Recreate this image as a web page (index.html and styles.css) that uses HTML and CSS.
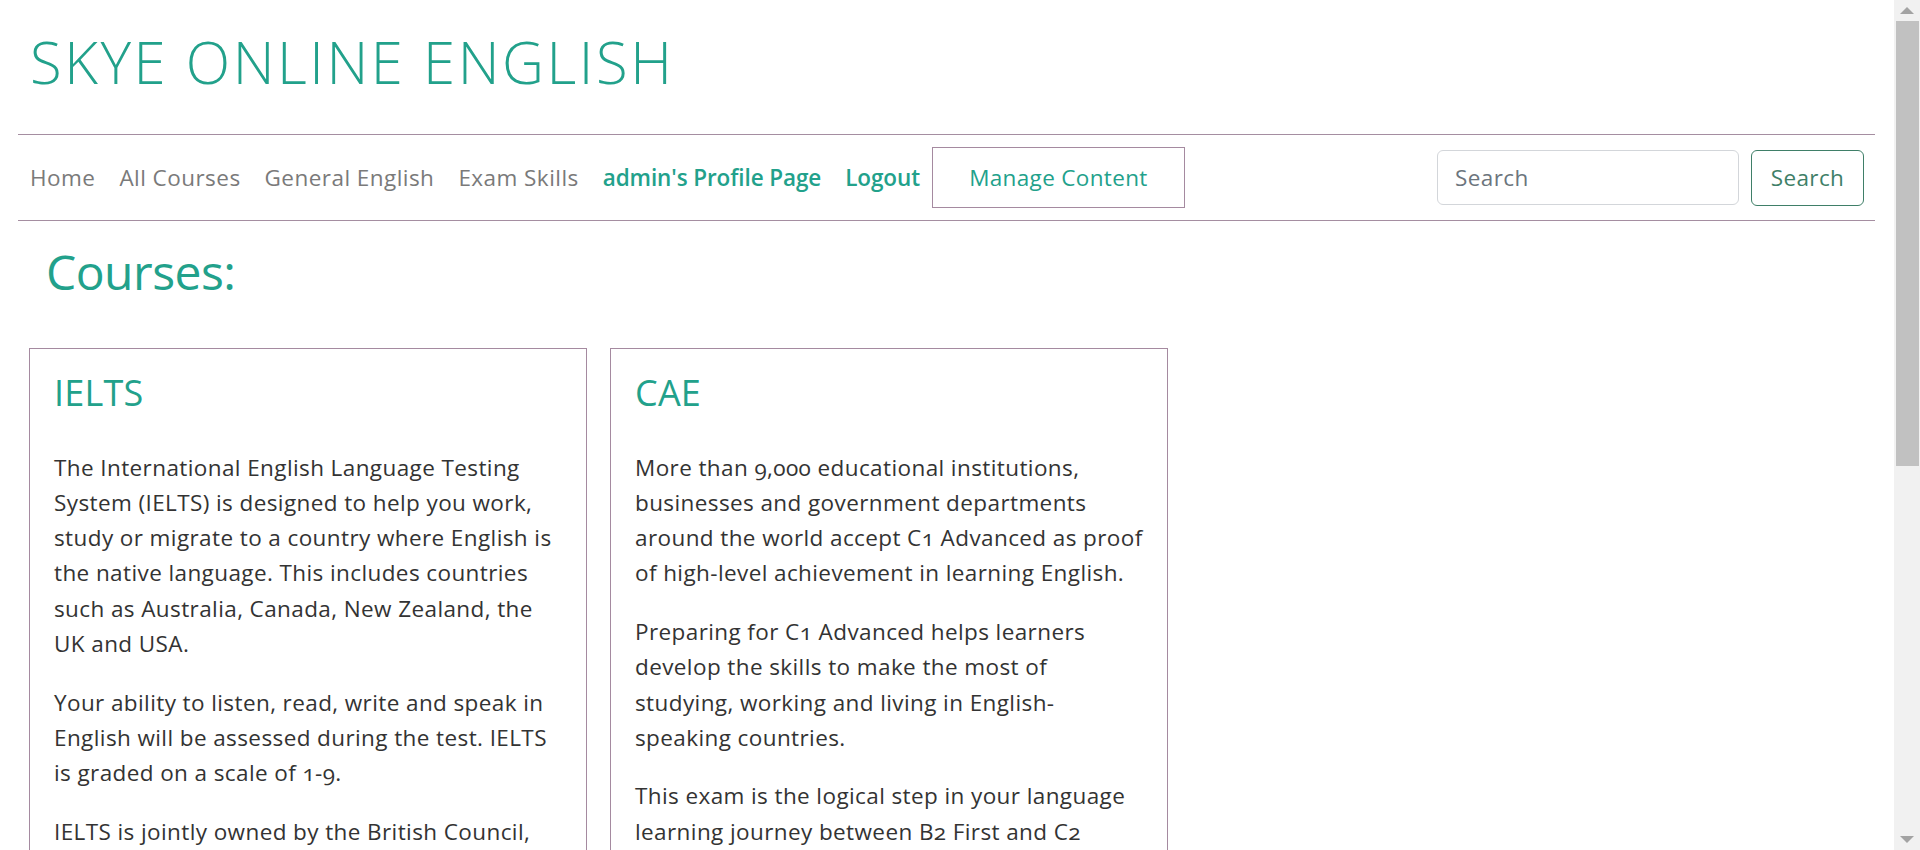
FILE: index.html
```html
<!DOCTYPE html>
<html lang="en">
<head>
<meta charset="utf-8">
<title>Skye Online English - Courses</title>
<link rel="stylesheet" href="styles.css">
</head>
<body>
<div class="page">
  <header class="masthead">
    <h1 class="brand">SKYE ONLINE ENGLISH</h1>
  </header>
  <nav class="navbar">
    <ul class="nav-links">
      <li><a class="nav-link" href="#">Home</a></li>
      <li><a class="nav-link" href="#">All Courses</a></li>
      <li><a class="nav-link" href="#">General English</a></li>
      <li><a class="nav-link" href="#">Exam Skills</a></li>
      <li><a class="nav-link nav-link-user" href="#">admin's Profile Page</a></li>
      <li><a class="nav-link nav-link-user" href="#">Logout</a></li>
      <li><a class="nav-manage" href="#">Manage Content</a></li>
    </ul>
    <form class="search-form">
      <input class="search-input" type="search" placeholder="Search">
      <button class="search-btn" type="button">Search</button>
    </form>
  </nav>
  <main class="content">
    <h2 class="section-title">Courses:</h2>
    <div class="course-list">
      <article class="course-card">
        <h3 class="course-title">IELTS</h3>
        <p>The International English Language Testing System (IELTS) is designed to help you work, study or migrate to a country where English is the native language. This includes countries such as Australia, Canada, New Zealand, the UK and USA.</p>
        <p>Your ability to listen, read, write and speak in English will be assessed during the test. IELTS is graded on a scale of 1-9.</p>
        <p>IELTS is jointly owned by the British Council, IDP: IELTS Australia and Cambridge Assessment English.</p>
      </article>
      <article class="course-card">
        <h3 class="course-title">CAE</h3>
        <p>More than 9,000 educational institutions, businesses and government departments around the world accept C1 Advanced as proof of high-level achievement in learning English.</p>
        <p>Preparing for C1 Advanced helps learners develop the skills to make the most of studying, working and living in English-speaking countries.</p>
        <p>This exam is the logical step in your language learning journey between B2 First and C2 Proficiency.</p>
      </article>
    </div>
  </main>
</div>
<div class="scrollbar" aria-hidden="true">
  <span class="sb-button"><span class="sb-arrow-up"></span></span>
  <span class="sb-thumb"></span>
  <span class="sb-track-rest"></span>
  <span class="sb-button"><span class="sb-arrow-down"></span></span>
</div>
</body>
</html>
```
FILE: styles.css
```css
body {
  margin: 0;
  background: #ffffff;
  color: #333333;
  font-family: "Open Sans", "Noto Sans", "DejaVu Sans", sans-serif;
  font-size: 22.5px;
  font-variant-numeric: oldstyle-nums;
}

.page {
  margin: 0 45px 0 18px;
}

/* browser scrollbar overlay */
.scrollbar {
  position: fixed;
  top: 0;
  right: 0;
  width: 26px;
  height: 100vh;
  background: #f1f1f1;
  display: flex;
  flex-direction: column;
}

.sb-button {
  display: flex;
  align-items: center;
  justify-content: center;
  height: 21px;
  flex: none;
}

.sb-arrow-up {
  width: 0;
  height: 0;
  border-left: 7px solid transparent;
  border-right: 7px solid transparent;
  border-bottom: 7px solid #a3a3a3;
}

.sb-arrow-down {
  width: 0;
  height: 0;
  border-left: 7px solid transparent;
  border-right: 7px solid transparent;
  border-top: 7px solid #a3a3a3;
}

.sb-thumb {
  flex: none;
  height: 445px;
  margin: 0 1px 0 2px;
  background: #c1c1c1;
}

.sb-track-rest {
  flex: 1;
}

.masthead {
  padding: 27px 12px 37px;
}

.brand {
  margin: 0;
  font-size: 58px;
  font-weight: 300;
  line-height: 70px;
  color: #22a18b;
  letter-spacing: 2.55px;
}

.navbar {
  display: flex;
  align-items: center;
  height: 85px;
  border-top: 1px solid #a58ea1;
  border-bottom: 1px solid #a58ea1;
  padding-right: 11px;
}

.nav-links {
  display: flex;
  align-items: center;
  list-style: none;
  margin: 0;
  padding: 0;
}

.nav-link {
  display: block;
  padding: 0 12px;
  color: #7a7a7a;
  text-decoration: none;
  font-size: 22.5px;
  line-height: 34px;
  letter-spacing: 0.45px;
}

.nav-link-user {
  color: #22a18b;
  font-weight: 600;
  letter-spacing: -0.1px;
}

.nav-manage {
  display: flex;
  align-items: center;
  justify-content: center;
  box-sizing: border-box;
  width: 253px;
  height: 61px;
  border: 1px solid #a58aa0;
  color: #22a18b;
  font-weight: 500;
  letter-spacing: 0.35px;
  text-decoration: none;
}

.search-form {
  display: flex;
  align-items: center;
  gap: 12px;
  margin-left: auto;
}

.search-input {
  box-sizing: border-box;
  width: 302px;
  height: 55px;
  padding: 0 17px;
  border: 1px solid #d3d6da;
  border-radius: 6px;
  font-family: inherit;
  font-size: 22.5px;
  letter-spacing: 0.4px;
  color: #495057;
  outline: none;
}

.search-input::placeholder {
  color: #6c757d;
}

.search-btn {
  box-sizing: border-box;
  width: 113px;
  height: 56px;
  border: 1px solid #3f7f68;
  border-radius: 6px;
  background: #ffffff;
  color: #3f7f68;
  font-family: inherit;
  font-size: 22.5px;
  letter-spacing: 0.4px;
}

.content {
  padding: 22px 0 0 11px;
}

.section-title {
  margin: 0 0 47px 17px;
  font-size: 48px;
  font-weight: 400;
  line-height: 57.6px;
  color: #22a18b;
  letter-spacing: -0.5px;
}

.course-list {
  display: flex;
  align-items: flex-start;
  gap: 23px;
}

.course-card {
  box-sizing: border-box;
  width: 558px;
  border: 1px solid #a58aa0;
  padding: 22px 24px 10px;
}

.course-title {
  margin: 0 0 36px;
  font-size: 36px;
  font-weight: 400;
  line-height: 43.2px;
  color: #22a18b;
  letter-spacing: 0.2px;
}

.course-card p {
  margin: 0 0 23.5px;
  line-height: 35.2px;
  letter-spacing: 0.4px;
}
```
